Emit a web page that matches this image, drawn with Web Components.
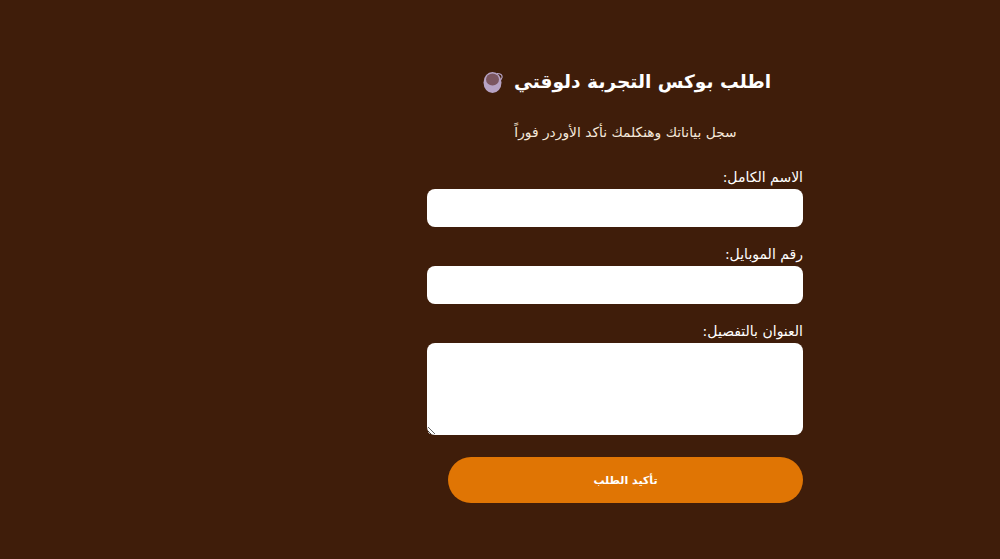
<!DOCTYPE html>
<html lang="ar" dir="rtl">
<head>
<meta charset="utf-8">
<title>اطلب بوكس التجربة</title>
<style>
  html, body { margin: 0; height: 100%; background: #3f1d0a; }
  body { font-family: "DejaVu Sans", "Noto Sans", sans-serif; color: #fff; overflow: hidden; }
</style>
</head>
<body>
<order-page>
  <order-form>
    <span slot="title">اطلب بوكس التجربة دلوقتي</span>
    <span slot="subtitle">سجل بياناتك وهنكلمك نأكد الأوردر فوراً</span>
    <form-field label="الاسم الكامل:" type="text"></form-field>
    <form-field label="رقم الموبايل:" type="tel"></form-field>
    <form-field label="العنوان بالتفصيل:" type="area"></form-field>
    <submit-button>تأكيد الطلب</submit-button>
  </order-form>
</order-page>

<script>
  (function () {
    "use strict";

    class OrderPage extends HTMLElement {
      connectedCallback() {
        if (this.shadowRoot) return;
        var root = this.attachShadow({ mode: "open" });
        root.innerHTML =
          "<style>" +
          ":host{display:flex;justify-content:flex-start;box-sizing:border-box;height:559px;padding:69px 197px 0 0}" +
          "</style><slot></slot>";
      }
    }

    class OrderForm extends HTMLElement {
      connectedCallback() {
        if (this.shadowRoot) return;
        var root = this.attachShadow({ mode: "open" });
        // title and subtitle sit a little right of the column centre in the reference
        root.innerHTML =
          "<style>" +
          ":host{display:flex;flex-direction:column;width:376px}" +
          "h2{margin:0;padding-left:24px;display:flex;justify-content:center;align-items:center;gap:11px;" +
          "font-size:18.6px;line-height:26px;font-weight:700;color:#fff}" +
          "svg{width:20px;height:24px;display:block}" +
          "p{margin:28px 0 0;padding-left:21px;text-align:center;font-size:13.8px;line-height:18px;color:#f4e8da}" +
          ".fields{margin-top:27px;display:flex;flex-direction:column}" +
          "</style>" +
          '<h2><slot name="title"></slot>' +
          '<svg viewBox="0 0 20 24" aria-hidden="true">' +
          '<ellipse cx="9.500" cy="12.500" rx="9" ry="10.500" fill="#b7a3c4"/>' +
          '<path d="M14 3.500c3.500 0 5.500 1.500 5 4-.4 1.800-1.500 3-3 3.500" fill="none" stroke="#b7a3c4" stroke-width="1.200"/>' +
          '<ellipse cx="9.500" cy="9.500" rx="6.500" ry="6" fill="#7b5660"/>' +
          "</svg></h2>" +
          '<p><slot name="subtitle"></slot></p>' +
          '<div class="fields"><slot></slot></div>';
      }
    }

    class FormField extends HTMLElement {
      connectedCallback() {
        if (this.shadowRoot) return;
        var type = this.getAttribute("type");
        var control = type === "area"
          ? "<textarea></textarea>"
          : '<input type="' + type + '">';
        var root = this.attachShadow({ mode: "open" });
        root.innerHTML =
          "<style>" +
          ":host{display:block;margin-bottom:18px}" +
          "label{display:block;font-size:14px;line-height:18px;margin-bottom:3px;color:#fff}" +
          "input,textarea{display:block;box-sizing:border-box;width:376px;border:0;border-radius:8px;background:#fff;margin:0;padding:8px;font:inherit}" +
          "input{height:38px}" +
          "textarea{height:92px;resize:vertical}" +
          "</style>" +
          "<label>" + this.getAttribute("label") + "</label>" + control;
      }
    }

    class SubmitButton extends HTMLElement {
      connectedCallback() {
        if (this.shadowRoot) return;
        var root = this.attachShadow({ mode: "open" });
        root.innerHTML =
          "<style>" +
          ":host{display:block;margin-top:4px}" +
          "button{display:block;box-sizing:border-box;width:355px;height:46px;border:0;border-radius:23px;" +
          "background:#e07504;color:#fff;font:700 11px/1 'DejaVu Sans',sans-serif;padding:0}" +
          "</style><button type=\"button\"><slot></slot></button>";
      }
    }

    customElements.define("order-page", OrderPage);
    customElements.define("order-form", OrderForm);
    customElements.define("form-field", FormField);
    customElements.define("submit-button", SubmitButton);
  })();
</script>
</body>
</html>
